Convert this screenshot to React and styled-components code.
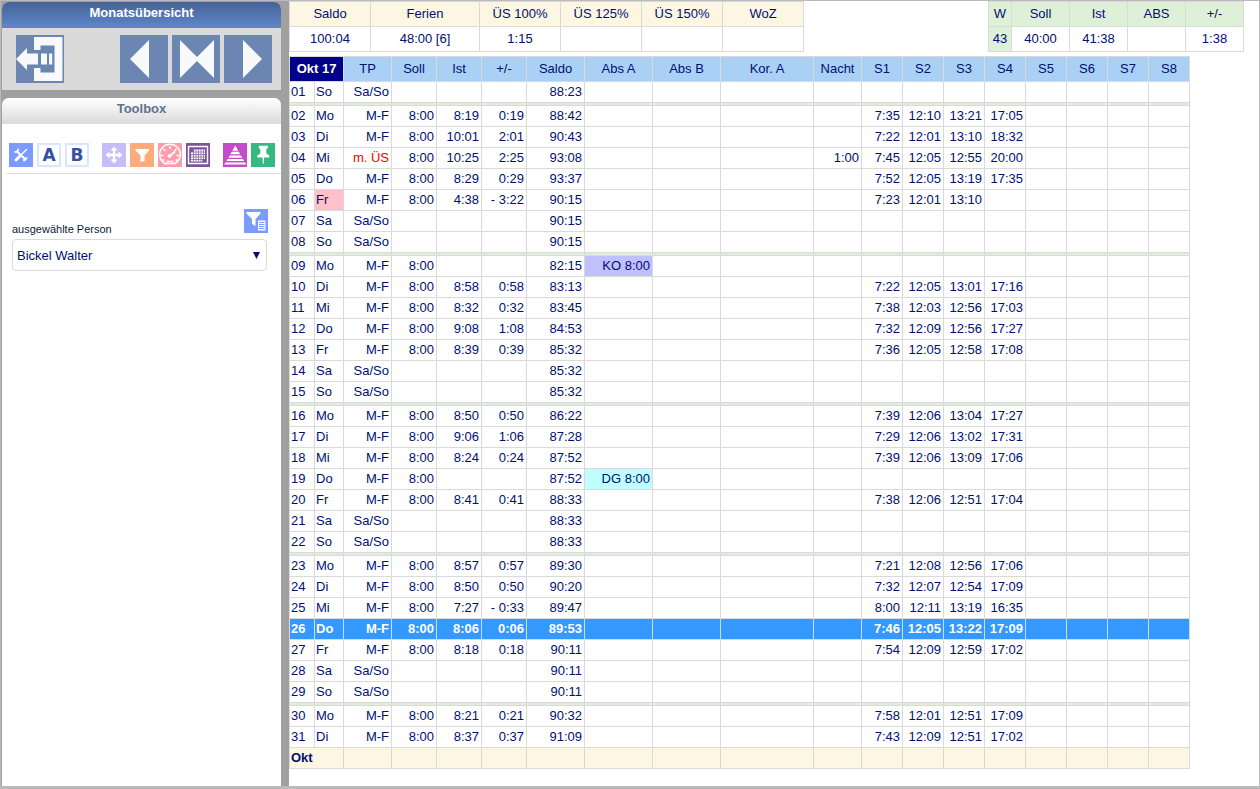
import React, { useState } from "react";
import styled, { createGlobalStyle, css } from "styled-components";

const GlobalStyle = createGlobalStyle`
  * {
    box-sizing: border-box;
  }
  body {
    margin: 0;
    background: #fff;
    color: #000f70;
    font-family: "Liberation Sans", Arial, sans-serif;
    font-size: 13px;
  }
`;

const Frame = styled.div`
  display: flex;
  min-height: 100vh;
  border: 1px solid #bababa;
  border-bottom-width: 3px;
`;

const Sidebar = styled.aside`
  display: flex;
  flex-direction: column;
  flex: 0 0 288px;
  gap: 8px;
  padding: 1px 8px 0 1px;
  background: #a0a0a0;
`;

const Panel = styled.section`
  flex: ${(props) => (props.$fill ? "1" : "none")};
  background: ${(props) => (props.$fill ? "#fff" : "#dadada")};
  border-radius: 7px 7px 0 0;
  overflow: hidden;
`;

const PanelTitle = styled.h2`
  margin: 0;
  height: 26px;
  line-height: 22px;
  font-size: 13px;
  text-align: center;
  color: ${(props) => (props.$light ? "#60738c" : "#fff")};
  background: ${(props) =>
    props.$light
      ? "linear-gradient(#ffffff, #dadada)"
      : "linear-gradient(#456396, #5f87cb)"};
`;

const NavBar = styled.nav`
  display: flex;
  gap: 4px;
  padding: 7px 9px 7px 14px;
`;

const NavButton = styled.button`
  width: 48px;
  height: 48px;
  padding: 0;
  border: 0;
  background: #6b86b2;
  cursor: pointer;
  margin-right: ${(props) => (props.$first ? "auto" : "0")};
  svg {
    display: block;
    fill: #f8f9fb;
  }
`;

const Toolbar = styled.div`
  display: flex;
  gap: 13px;
  margin-left: 5px;
  padding: 19px 0 6px 2px;
  border-bottom: 1px solid #dadada;
`;

const ToolGroup = styled.div`
  display: flex;
  gap: 4px;
`;

const ToolButton = styled.button`
  flex: none;
  width: 24px;
  height: 24px;
  padding: 0;
  border: ${(props) => (props.$letter ? "2px solid #d9e7fa" : "0")};
  background: ${(props) => props.$bg || "#fff"};
  color: #3350a4;
  font: bold 17px/20px "DejaVu Sans", sans-serif;
  text-align: center;
  cursor: pointer;
  svg {
    display: block;
  }
`;

const PersonForm = styled.div`
  padding: 35px 14px 0 10px;
`;

const PersonHead = styled.div`
  display: flex;
  justify-content: space-between;
  align-items: flex-end;
  margin: 0 -1px 6px 0;
`;

const PersonLabel = styled.label`
  font-size: 11px;
  line-height: 8px;
  color: #0c1c38;
`;

const SelectBox = styled.div`
  position: relative;
  svg {
    position: absolute;
    right: 7px;
    top: 13px;
    pointer-events: none;
  }
`;

const Select = styled.select`
  display: block;
  width: 100%;
  height: 32px;
  padding: 0 20px 0 4px;
  appearance: none;
  border: 1px solid #dadada;
  border-radius: 4px;
  background: #fff;
  color: #000f70;
  font: inherit;
`;

const Content = styled.main`
  flex: 1;
  min-width: 0;
`;

const Totals = styled.div`
  display: flex;
  justify-content: space-between;
  padding-right: 15px;
  margin-bottom: 4px;
`;

const Table = styled.table`
  table-layout: fixed;
  width: ${(props) => props.$width}px;
  border-spacing: 0;
  border: solid #dadada;
  border-width: 1px 0 0 1px;
`;

const HeadCell = styled.th`
  height: 25px;
  padding: 0;
  font-weight: normal;
  line-height: 24px;
  white-space: nowrap;
  border: solid #dadada;
  border-width: 0 1px 1px 0;
  background: ${(props) => props.$bg};
  ${(props) =>
    props.$month &&
    css`
      background: #00008b;
      color: #fff;
      font-weight: bold;
    `}
`;

const TotalCell = styled.td`
  height: 25px;
  padding: 0;
  line-height: 24px;
  text-align: center;
  border: solid #dadada;
  border-width: 0 1px 1px 0;
  background: ${(props) => props.$bg || "#fff"};
`;

const Cell = styled.td`
  height: 21px;
  padding: 0 2px 0 1px;
  line-height: 20px;
  text-align: ${(props) => (props.$left ? "left" : "right")};
  white-space: nowrap;
  border: solid #dadada;
  border-width: 0 1px 1px 0;
  background: ${(props) => props.$bg || "transparent"};
  color: ${(props) => props.$color || "inherit"};
`;

const DayRow = styled.tr`
  cursor: pointer;
  ${(props) =>
    props.$active &&
    css`
      background: #3399ff;
      color: #fff;
      font-weight: bold;
      td {
        border-color: #c4e0fa;
      }
    `}
`;

const WeekGap = styled.td`
  height: 3px;
  padding: 0;
  border: solid #dadada;
  border-width: 0 1px 1px 0;
  background: #e1eddc;
`;

const MonthRow = styled.tr`
  background: #fdf6e3;
  font-weight: bold;
`;

const CREAM = "#fdf6e3";
const GREEN = "#dff0d8";
const BLUE = "#aad1f5";

const balances = [
  { label: "Saldo", value: "100:04", width: 81 },
  { label: "Ferien", value: "48:00 [6]", width: 109 },
  { label: "ÜS 100%", value: "1:15", width: 81 },
  { label: "ÜS 125%", value: "", width: 81 },
  { label: "ÜS 150%", value: "", width: 81 },
  { label: "WoZ", value: "", width: 81 },
];

const week = [
  { label: "W", value: "43", width: 23, bg: GREEN },
  { label: "Soll", value: "40:00", width: 58 },
  { label: "Ist", value: "41:38", width: 58 },
  { label: "ABS", value: "", width: 58 },
  { label: "+/-", value: "1:38", width: 58 },
];

const columns = ["TP", "Soll", "Ist", "+/-", "Saldo", "Abs A", "Abs B", "Kor. A", "Nacht",
  "S1", "S2", "S3", "S4", "S5", "S6", "S7", "S8"];
const colWidths = [25, 29, 48, 45, 45, 45, 58, 68, 68, 93, 48, 41, 41, 41, 41, 41, 41, 41, 41];

// day, weekday, plan, target, actual, difference, balance, stamps
const days = [
  ["01", "So", "Sa/So", "", "", "", "88:23"],
  ["02", "Mo", "M-F", "8:00", "8:19", "0:19", "88:42", "7:35 12:10 13:21 17:05"],
  ["03", "Di", "M-F", "8:00", "10:01", "2:01", "90:43", "7:22 12:01 13:10 18:32"],
  ["04", "Mi", "m. ÜS", "8:00", "10:25", "2:25", "93:08", "7:45 12:05 12:55 20:00"],
  ["05", "Do", "M-F", "8:00", "8:29", "0:29", "93:37", "7:52 12:05 13:19 17:35"],
  ["06", "Fr", "M-F", "8:00", "4:38", "- 3:22", "90:15", "7:23 12:01 13:10"],
  ["07", "Sa", "Sa/So", "", "", "", "90:15"],
  ["08", "So", "Sa/So", "", "", "", "90:15"],
  ["09", "Mo", "M-F", "8:00", "", "", "82:15"],
  ["10", "Di", "M-F", "8:00", "8:58", "0:58", "83:13", "7:22 12:05 13:01 17:16"],
  ["11", "Mi", "M-F", "8:00", "8:32", "0:32", "83:45", "7:38 12:03 12:56 17:03"],
  ["12", "Do", "M-F", "8:00", "9:08", "1:08", "84:53", "7:32 12:09 12:56 17:27"],
  ["13", "Fr", "M-F", "8:00", "8:39", "0:39", "85:32", "7:36 12:05 12:58 17:08"],
  ["14", "Sa", "Sa/So", "", "", "", "85:32"],
  ["15", "So", "Sa/So", "", "", "", "85:32"],
  ["16", "Mo", "M-F", "8:00", "8:50", "0:50", "86:22", "7:39 12:06 13:04 17:27"],
  ["17", "Di", "M-F", "8:00", "9:06", "1:06", "87:28", "7:29 12:06 13:02 17:31"],
  ["18", "Mi", "M-F", "8:00", "8:24", "0:24", "87:52", "7:39 12:06 13:09 17:06"],
  ["19", "Do", "M-F", "8:00", "", "", "87:52"],
  ["20", "Fr", "M-F", "8:00", "8:41", "0:41", "88:33", "7:38 12:06 12:51 17:04"],
  ["21", "Sa", "Sa/So", "", "", "", "88:33"],
  ["22", "So", "Sa/So", "", "", "", "88:33"],
  ["23", "Mo", "M-F", "8:00", "8:57", "0:57", "89:30", "7:21 12:08 12:56 17:06"],
  ["24", "Di", "M-F", "8:00", "8:50", "0:50", "90:20", "7:32 12:07 12:54 17:09"],
  ["25", "Mi", "M-F", "8:00", "7:27", "- 0:33", "89:47", "8:00 12:11 13:19 16:35"],
  ["26", "Do", "M-F", "8:00", "8:06", "0:06", "89:53", "7:46 12:05 13:22 17:09"],
  ["27", "Fr", "M-F", "8:00", "8:18", "0:18", "90:11", "7:54 12:09 12:59 17:02"],
  ["28", "Sa", "Sa/So", "", "", "", "90:11"],
  ["29", "So", "Sa/So", "", "", "", "90:11"],
  ["30", "Mo", "M-F", "8:00", "8:21", "0:21", "90:32", "7:58 12:01 12:51 17:09"],
  ["31", "Di", "M-F", "8:00", "8:37", "0:37", "91:09", "7:43 12:09 12:51 17:02"],
];

const absences = {
  "09": { text: "KO 8:00", bg: "#c0bfff" },
  "19": { text: "DG 8:00", bg: "#bfffff" },
};
const nightHours = { "04": "1:00" };
const flaggedDays = { "06": "#ffc0cb" };

const tools = [
  [
    {
      label: "Werkzeuge",
      bg: "#7b9bff",
      icon: (
        <g stroke="#fff" fill="none" strokeLinecap="round">
          <path d="M8 8.500L16.500 16.500" strokeWidth="2.400" />
          <path d="M5.800 8.800a2.400 2.400 0 0 0 3.400-2.600M15 17.800a2.400 2.400 0 0 1 2.700-2.800" strokeWidth="1.600" />
          <path d="M17.500 6.500L12.500 11.500" strokeWidth="1.400" />
          <path d="M10.500 13.500L7 17" strokeWidth="3" />
        </g>
      ),
    },
    { label: "Ansicht A", letter: "A" },
    { label: "Ansicht B", letter: "B" },
  ],
  [
    {
      label: "Verschieben",
      bg: "#c5bdfb",
      icon: (
        <path
          fill="#fff"
          d="M12 3.500l3.500 4h-2.300v3.300h3.300V8.500l4 3.500-4 3.500v-2.300h-3.300v3.300h2.300l-3.500 4-3.500-4h2.300v-3.300H7.500v2.300l-4-3.500 4-3.500v2.300h3.300V7.500H8.500z"
        />
      ),
    },
    {
      label: "Filter",
      bg: "#fdab7c",
      icon: <path fill="#fff" d="M5.500 6H19v1.500l-4.500 5V18l-4 1v-6.500l-5-5z" />,
    },
    {
      label: "Auswertung",
      bg: "#fc9cac",
      icon: (
        <g stroke="#fff" fill="none">
          <path d="M7 20.500A10.300 10.300 0 1 1 17 20.500z" strokeWidth="1.500" />
          <path d="M12 3v3M5.500 6l2 2M18.500 6l-2 2M2.500 12.500h3M18.500 12.500h3M4.500 17.500l2-1M19.500 17.500l-2-1M8.500 18.500h7" strokeWidth="1.400" />
          <path d="M11 13.500L17 8.500" strokeWidth="1.800" />
          <circle cx="11.500" cy="13" r="1.500" fill="#fff" />
        </g>
      ),
    },
    {
      label: "Kalender",
      bg: "#7d549b",
      icon: (
        <g>
          <path d="M2.500 3.500h19v17h-19z" fill="none" stroke="#fff" strokeWidth="1.400" />
          <path d="M7.500 6.500H19V16h-2.500v2.500H5V9h2.500z" fill="#fff" />
          <path d="M5 9h14M5 11.500h14M5 14h14M5 16.500h14M7.500 6.500v12M10 6.500v12M12.500 6.500v12M15 6.500v12M17.500 6.500v10" stroke="#7d549b" strokeWidth="0.700" />
        </g>
      ),
    },
  ],
  [
    {
      label: "Hierarchie",
      bg: "#c44cc8",
      icon: (
        <path
          fill="#fff"
          d="M12.300 2.500l2.900 5.200H9.400zM8.800 8.800h7l1.400 2.400H7.400zM6.700 12.500h11.200l1.300 2.200H5.400zM4.700 16h15.200l1.300 2H3.400zM2.500 19.400h19.600l1.200 2.200H1.200z"
        />
      ),
    },
    {
      label: "Anheften",
      bg: "#35b981",
      icon: <path fill="#fff" d="M7.800 2.800h9v2.400l-1.500.8v4.500l3 2V14.500h-5.200l-.4 6.500h-.8l-.4-6.500H6.300v-2l3-2V6l-1.500-.8z" />,
    },
  ],
];

const navItems = [
  {
    label: "Zurück",
    path: "M18 2h28.500v44H18V33h6.500v4.500h14v-27h-14V15H18zM0 24l11-11v5.500h11v11H11V35zM25 18.500h6v11h-6zM33 18.500h3.200v11H33z",
  },
  { label: "Vorheriger Monat", path: "M10 24L29 5v38z" },
  { label: "Aktueller Monat", path: "M8 5l17 17L42 5v38L25 26 8 43z" },
  { label: "Nächster Monat", path: "M38 24L19 5v38z" },
];

const ToolIcon = ({ tool }) => (
  <ToolButton type="button" aria-label={tool.label} $bg={tool.bg} $letter={tool.letter}>
    {tool.letter || (
      <svg width="24" height="24" viewBox="0 0 24 24">
        {tool.icon}
      </svg>
    )}
  </ToolButton>
);

const TotalsTable = ({ items, headBg }) => {
  const width = items.reduce((sum, item) => sum + item.width, 1);

  return (
    <Table $width={width}>
      <colgroup>
        {items.map((item) => (
          <col key={item.label} width={item.width} />
        ))}
      </colgroup>
      <thead>
        <tr>
          {items.map((item) => (
            <HeadCell key={item.label} $bg={headBg}>{item.label}</HeadCell>
          ))}
        </tr>
      </thead>
      <tbody>
        <tr>
          {items.map((item) => (
            <TotalCell key={item.label} $bg={item.bg}>{item.value}</TotalCell>
          ))}
        </tr>
      </tbody>
    </Table>
  );
};

const Day = ({ data, active, onSelect }) => {
  const [day, weekday, plan, target, actual, diff, saldo, stampText = ""] = data;
  const stamps = stampText.split(" ");
  const absence = absences[day] || {};

  return (
    <React.Fragment>
      <DayRow $active={active} onClick={() => onSelect(day)}>
        <Cell $left>{day}</Cell>
        <Cell $left $bg={flaggedDays[day]}>{weekday}</Cell>
        <Cell $color={plan === "m. ÜS" ? "#f00000" : null}>{plan}</Cell>
        <Cell>{target}</Cell>
        <Cell>{actual}</Cell>
        <Cell>{diff}</Cell>
        <Cell>{saldo}</Cell>
        <Cell $bg={absence.bg}>{absence.text}</Cell>
        <Cell />
        <Cell />
        <Cell>{nightHours[day]}</Cell>
        {[0, 1, 2, 3, 4, 5, 6, 7].map((i) => (
          <Cell key={i}>{stamps[i]}</Cell>
        ))}
      </DayRow>
      {weekday === "So" && (
        <tr>
          {colWidths.map((w, i) => (
            <WeekGap key={i} />
          ))}
        </tr>
      )}
    </React.Fragment>
  );
};

const App = () => {
  const [selected, setSelected] = useState("26");

  return (
    <Frame>
      <GlobalStyle />
      <Sidebar>
        <Panel>
          <PanelTitle>Monatsübersicht</PanelTitle>
          <NavBar>
            {navItems.map((item, index) => (
              <NavButton key={item.label} type="button" aria-label={item.label} $first={index === 0}>
                <svg width="48" height="48" viewBox="0 0 48 48">
                  <path d={item.path} />
                </svg>
              </NavButton>
            ))}
          </NavBar>
        </Panel>
        <Panel $fill>
          <PanelTitle $light>Toolbox</PanelTitle>
          <Toolbar>
            {tools.map((group, index) => (
              <ToolGroup key={index}>
                {group.map((tool) => (
                  <ToolIcon key={tool.label} tool={tool} />
                ))}
              </ToolGroup>
            ))}
          </Toolbar>
          <PersonForm>
            <PersonHead>
              <PersonLabel htmlFor="person">ausgewählte Person</PersonLabel>
              <ToolButton type="button" aria-label="Personen filtern" $bg="#7b9bff">
                <svg width="24" height="24" viewBox="0 0 24 24">
                  <path fill="#fff" d="M2.500 3h14v1.500L11.500 10v7L8 15v-5L2.500 4.500z" />
                  <path fill="#fff" d="M14 11.500h7.500v10H14z" />
                  <path stroke="#7b9bff" d="M15 13.500h5.500M15 15.500h5.500M15 17.500h5.500M15 19.500h5.500" />
                </svg>
              </ToolButton>
            </PersonHead>
            <SelectBox>
              <Select id="person" defaultValue="Bickel Walter">
                <option>Bickel Walter</option>
              </Select>
              <svg width="7" height="7" viewBox="0 0 7 7">
                <path fill="#000f70" d="M0 0h7L3.500 7z" />
              </svg>
            </SelectBox>
          </PersonForm>
        </Panel>
      </Sidebar>
      <Content>
        <Totals>
          <TotalsTable items={balances} headBg={CREAM} />
          <TotalsTable items={week} headBg={GREEN} />
        </Totals>
        <Table $width={901}>
          <colgroup>
            {colWidths.map((w, i) => (
              <col key={i} width={w} />
            ))}
          </colgroup>
          <thead>
            <tr>
              <HeadCell colSpan={2} $month>Okt 17</HeadCell>
              {columns.map((name) => (
                <HeadCell key={name} $bg={BLUE}>{name}</HeadCell>
              ))}
            </tr>
          </thead>
          <tbody>
            {days.map((data) => (
              <Day key={data[0]} data={data} active={data[0] === selected} onSelect={setSelected} />
            ))}
          </tbody>
          <tfoot>
            <MonthRow>
              <Cell $left colSpan={2}>Okt</Cell>
              {columns.map((name) => (
                <Cell key={name} />
              ))}
            </MonthRow>
          </tfoot>
        </Table>
      </Content>
    </Frame>
  );
};

export default App;
